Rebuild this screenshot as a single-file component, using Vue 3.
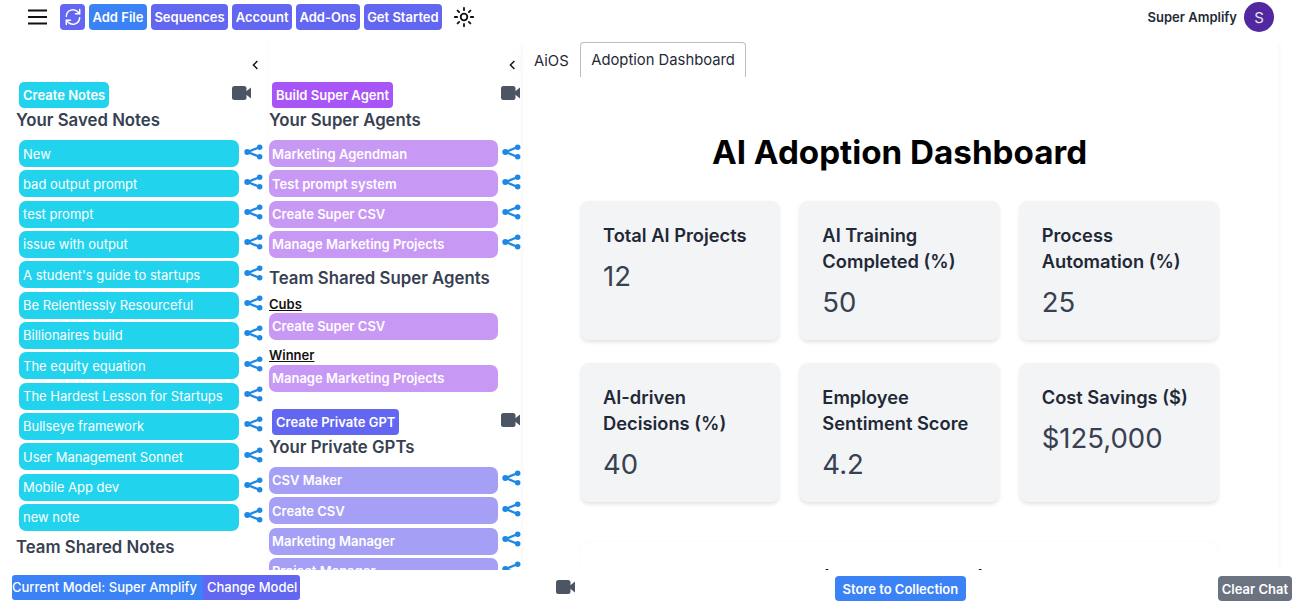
<script setup>
const notes = ['New','bad output prompt','test prompt','issue with output',"A student's guide to startups",'Be Relentlessly Resourceful','Billionaires build','The equity equation','The Hardest Lesson for Startups','Bullseye framework','User Management Sonnet','Mobile App dev','new note']
const agents = ['Marketing Agendman','Test prompt system','Create Super CSV','Manage Marketing Projects']
const gpts = ['CSV Maker','Create CSV','Marketing Manager','Project Manager']
const navs = ['Sequences','Account','Add-Ons','Get Started']
const cards = [
  { t: 'Total AI Projects', v: '12' },
  { t: 'AI Training Completed (%)', v: '50' },
  { t: 'Process Automation (%)', v: '25' },
  { t: 'AI-driven Decisions (%)', v: '40' },
  { t: 'Employee Sentiment Score', v: '4.2' },
  { t: 'Cost Savings ($)', v: '$125,000' }
]
</script>

<template>
  <div class="page">
    <header class="top">
      <svg class="burger" viewBox="0 0 20 16" width="20" height="16"><path d="M0 1.500h19M0 8h19M0 14.500h19" stroke="#111" stroke-width="2" fill="none"/></svg>
      <button class="btn indigo icon-btn">
        <svg viewBox="0 0 24 24" width="20" height="20" fill="none" stroke="#fff" stroke-width="1.800" stroke-linecap="round" stroke-linejoin="round"><path d="M4 11a8 8 0 0 1 14-5l2 2"/><path d="M20 3v5h-5"/><path d="M20 13a8 8 0 0 1-14 5l-2-2"/><path d="M4 21v-5h5"/></svg>
      </button>
      <button class="btn blue nav">Add File</button>
      <button v-for="n in navs" :key="n" class="btn indigo nav">{{ n }}</button>
      <svg class="sun" viewBox="0 0 24 24" width="22" height="22" fill="none" stroke="#111" stroke-width="2" stroke-linecap="round"><circle cx="12" cy="12" r="3.600"/><path d="M12 2v2.500M12 19.500V22M2 12h2.500M19.500 12H22M5 5l1.700 1.700M17.300 17.300 19 19M5 19l1.700-1.700M17.300 6.700 19 5"/></svg>
      <div class="user">
        <span class="user-name">Super Amplify</span>
        <span class="avatar">S</span>
      </div>
    </header>

    <main class="body">
      <aside class="col col-notes">
        <div class="collapse"><svg viewBox="0 0 10 14" width="8" height="12" fill="none" stroke="#111" stroke-width="1.800"><path d="M8 2 3 7l5 5"/></svg></div>
        <div class="action-row">
          <button class="btn cyan">Create Notes</button>
          <svg class="cam" viewBox="0 0 19 14" width="19" height="14"><rect x="0" y="0" width="14.500" height="14" rx="2.500" fill="#4b5563"/><path d="M14 5.500 19 1.500v11L14 8.500z" fill="#4b5563"/></svg>
        </div>
        <h2 class="heading">Your Saved Notes</h2>
        <ul class="list">
          <li v-for="n in notes" :key="n" class="item">
            <span class="pill cyan-pill reg">{{ n }}</span>
            <svg class="share" viewBox="0 0 20 16" width="19" height="16"><path d="M16 3 4 8l12 5" stroke="#1e88e5" stroke-width="2.400" fill="none"/><circle cx="16.500" cy="3" r="2.900" fill="#1e88e5"/><circle cx="3.500" cy="8" r="3.200" fill="#1e88e5"/><circle cx="16.500" cy="13" r="2.900" fill="#1e88e5"/></svg>
          </li>
        </ul>
        <h2 class="heading team-notes">Team Shared Notes</h2>
      </aside>

      <aside class="col col-agents">
        <div class="collapse"><svg viewBox="0 0 10 14" width="8" height="12" fill="none" stroke="#111" stroke-width="1.800"><path d="M8 2 3 7l5 5"/></svg></div>
        <div class="action-row">
          <button class="btn purple">Build Super Agent</button>
          <svg class="cam" viewBox="0 0 19 14" width="19" height="14"><rect x="0" y="0" width="14.500" height="14" rx="2.500" fill="#4b5563"/><path d="M14 5.500 19 1.500v11L14 8.500z" fill="#4b5563"/></svg>
        </div>
        <h2 class="heading">Your Super Agents</h2>
        <ul class="list">
          <li v-for="n in agents" :key="n" class="item">
            <span class="pill lilac">{{ n }}</span>
            <svg class="share" viewBox="0 0 20 16" width="19" height="16"><path d="M16 3 4 8l12 5" stroke="#1e88e5" stroke-width="2.400" fill="none"/><circle cx="16.500" cy="3" r="2.900" fill="#1e88e5"/><circle cx="3.500" cy="8" r="3.200" fill="#1e88e5"/><circle cx="16.500" cy="13" r="2.900" fill="#1e88e5"/></svg>
          </li>
        </ul>
        <h2 class="heading team-agents">Team Shared Super Agents</h2>
        <h3 class="team">Cubs</h3>
        <div class="item"><span class="pill lilac">Create Super CSV</span></div>
        <h3 class="team team-2">Winner</h3>
        <div class="item"><span class="pill lilac">Manage Marketing Projects</span></div>
        <div class="action-row private">
          <button class="btn indigo">Create Private GPT</button>
          <svg class="cam" viewBox="0 0 19 14" width="19" height="14"><rect x="0" y="0" width="14.500" height="14" rx="2.500" fill="#4b5563"/><path d="M14 5.500 19 1.500v11L14 8.500z" fill="#4b5563"/></svg>
        </div>
        <h2 class="heading">Your Private GPTs</h2>
        <ul class="list">
          <li v-for="n in gpts" :key="n" class="item">
            <span class="pill violet">{{ n }}</span>
            <svg class="share" viewBox="0 0 20 16" width="19" height="16"><path d="M16 3 4 8l12 5" stroke="#1e88e5" stroke-width="2.400" fill="none"/><circle cx="16.500" cy="3" r="2.900" fill="#1e88e5"/><circle cx="3.500" cy="8" r="3.200" fill="#1e88e5"/><circle cx="16.500" cy="13" r="2.900" fill="#1e88e5"/></svg>
          </li>
        </ul>
      </aside>

      <section class="content">
        <nav class="tabs">
          <span class="tab">AiOS</span>
          <span class="tab active">Adoption Dashboard</span>
        </nav>
        <div class="dash">
          <h1 class="title">AI Adoption Dashboard</h1>
          <div class="grid">
            <article v-for="c in cards" :key="c.t" class="card">
              <h3 class="card-title">{{ c.t }}</h3>
              <p class="card-value">{{ c.v }}</p>
            </article>
          </div>
          <section class="sync">
            <h2 class="sync-title">Processes or AI Services to Sync with AI</h2>
          </section>
        </div>
      </section>
    </main>

    <footer class="bottom">
      <div class="model">
        <span class="model-cur">Current Model: Super Amplify</span>
        <span class="model-chg">Change Model</span>
      </div>
      <svg class="cam foot-cam" viewBox="0 0 19 14" width="19" height="14"><rect x="0" y="0" width="14.500" height="14" rx="2.500" fill="#4b5563"/><path d="M14 5.500 19 1.500v11L14 8.500z" fill="#4b5563"/></svg>
      <button class="btn blue store">Store to Collection</button>
      <button class="btn clear">Clear Chat</button>
    </footer>
  </div>
</template>

<style>
html, body { margin: 0; background: #fff; overflow: hidden; }
</style>

<style scoped>
.page { width: 1292px; height: 601px; display: flex; flex-direction: column; overflow: hidden; font-family: Inter, "Liberation Sans", sans-serif; background: #fff; }
.top { height: 42px; flex: none; display: flex; align-items: center; padding: 0 18px 8px 28px; box-sizing: border-box; gap: 4px; }
.burger { margin-right: 8px; }
.btn { border: 0; font-family: inherit; font-weight: 600; font-size: 13px; color: #fff; border-radius: 4px; height: 26px; padding: 0 4px; white-space: nowrap; }
.nav { padding: 0 3.500px; }
.indigo { background: #6366f1; }
.blue { background: #3b82f6; }
.cyan { background: #22d3ee; border-radius: 5px; }
.purple { background: #a855f7; }
.icon-btn { width: 25px; padding: 0; display: flex; align-items: center; justify-content: center; }
.sun { margin-left: 7px; }
.user { margin-left: auto; display: flex; align-items: center; gap: 7px; }
.user-name { font-size: 13px; font-weight: 600; color: #1f2937; }
.avatar { width: 30px; height: 30px; border-radius: 50%; background: #5128a0; color: #e5e7eb; font-size: 15px; display: flex; align-items: center; justify-content: center; }
.body { flex: 1; min-height: 0; display: flex; overflow: hidden; }
.col { flex: none; box-sizing: border-box; position: relative; overflow: hidden; }
.col-notes { width: 269px; padding: 40px 0 0 16px; }
.col-agents { width: 254px; padding: 40px 0 0 0; box-shadow: -2px 0 4px rgba(0,0,0,.02); }
.collapse { position: absolute; top: 13px; right: 6px; width: 16px; height: 20px; display: flex; align-items: center; justify-content: center; background: #fff; border-radius: 4px; box-shadow: 0 0 2px rgba(0,0,0,.03); }
.col-agents .collapse { right: 3px; }
.action-row { display: flex; align-items: flex-start; justify-content: space-between; height: 26px; padding-left: 3px; padding-right: 18px; }
.col-agents .action-row { padding-left: 3px; padding-right: 3px; }
.cam { flex: none; }
.action-row .cam { margin-top: 4px; }
.heading { margin: 0; font-size: 16.800px; line-height: 24px; font-weight: 600; color: #374151; }
.list { list-style: none; margin: 8px 0 0; padding: 0; display: flex; flex-direction: column; gap: 3.330px; }
.col-notes .list { padding-left: 3px; }
.item { display: flex; align-items: center; height: 27px; gap: 4px; }
.col-notes .item { gap: 5px; }
.pill { display: flex; align-items: center; width: 220px; flex: none; height: 27px; box-sizing: border-box; padding-left: 4px; font-size: 13px; font-weight: 600; color: #fff; border-radius: 7px; }
.col-agents .pill { width: 229px; padding-left: 3px; }
.cyan-pill { background: #22d3ee; }
.reg { font-weight: 400; }
.lilac { background: #c898f5; }
.violet { background: #a5a0f5; }
.share { margin-top: -4px; flex: none; }
.team-notes { padding-top: 4px; }
.team-agents { padding-top: 8px; }
.team { margin: 5px 0 0; font-size: 13px; line-height: 18px; font-weight: 600; color: #111; text-decoration: underline; }
.team-2 { margin-top: 6px; }
.team-2 + .item { margin-top: 1px; }
.private { margin-top: 17px; }
.content { flex: 1; min-width: 0; margin-right: 14px; position: relative; overflow: hidden; box-shadow: 0 0 6px rgba(0,0,0,.06); display: flex; flex-direction: column; }
.tabs { display: flex; align-items: flex-end; height: 35px; padding-left: 2px; flex: none; }
.tab { font-size: 14.800px; color: #1f2937; padding: 0 9px; height: 34px; line-height: 36px; }
.tab.active { border: 1px solid #bdbdbd; border-bottom: 0; border-radius: 4px 4px 0 0; padding: 0 10.500px; margin-left: 2px; line-height: 35px; }
.dash { padding: 0 60px 0 58px; }
.title { margin: 55px 0 29px; text-align: center; font-size: 33.200px; line-height: 40px; font-weight: 700; color: #000; }
.grid { display: grid; grid-template-columns: repeat(3, 1fr); gap: 23px 21px; }
.card { background: #f3f4f6; border-radius: 8px; box-shadow: 0 2px 4px rgba(0,0,0,.12); height: 139px; box-sizing: border-box; padding: 21px 22px; }
.card-title { margin: 0; font-size: 18.300px; line-height: 26px; font-weight: 600; color: #1f2937; }
.card-value { margin: 10px 0 0; font-size: 27.500px; line-height: 36px; color: #374151; }
.sync { margin-top: 40px; padding: 21px 22px; box-shadow: 0 0 2px rgba(0,0,0,.06); border-radius: 8px; }
.sync-title { margin: 0; font-size: 22px; line-height: 30px; font-weight: 600; color: #000; white-space: nowrap; }
.bottom { height: 31px; flex: none; position: relative; display: flex; align-items: flex-start; padding: 5px 0 0 12px; box-sizing: border-box; background: #fff; }
.model { display: flex; height: 25px; border-radius: 3px; overflow: hidden; font-size: 13px; font-weight: 500; color: #fff; line-height: 25px; }
.model-cur { background: #3b82f6; width: 191px; white-space: nowrap; }
.model-chg { background: #6366f1; width: 97px; box-sizing: border-box; padding-left: 4px; white-space: nowrap; }
.foot-cam { margin-left: 256px; margin-top: 5px; }
.store { margin-left: 260px; height: 25px; padding: 0 7.500px; margin-top: 1px; }
.clear { margin-left: auto; background: #6b7280; height: 25px; margin-top: 1px; }
</style>
